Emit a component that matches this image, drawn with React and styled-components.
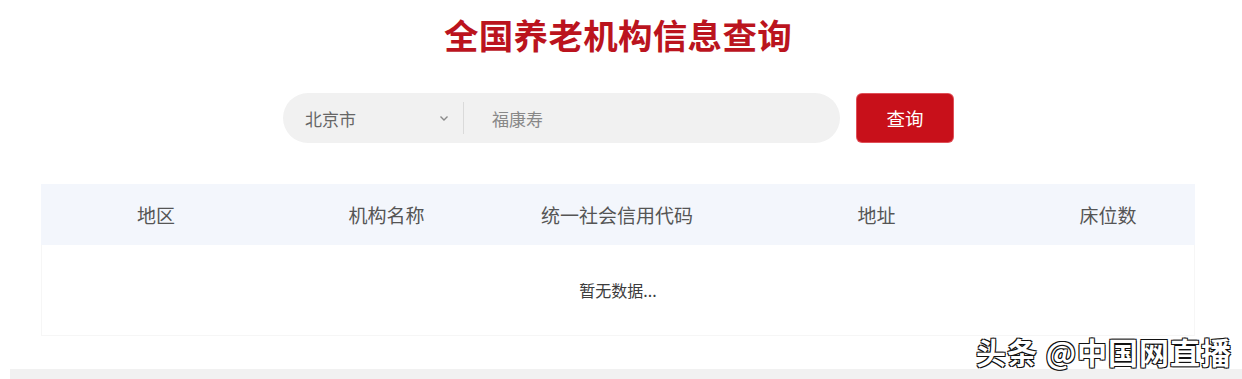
import React from 'react';
import styled, { createGlobalStyle } from 'styled-components';

const GlobalStyle = createGlobalStyle`
  body {
    margin: 0;
    background: #ffffff;
    font-family: "Noto Sans CJK SC", "Noto Sans", sans-serif;
  }
`;

const Page = styled.div`
  position: relative;
  width: 1242px;
  height: 379px;
  box-sizing: border-box;
  padding-right: 6px;
  overflow: hidden;
  display: flex;
  flex-direction: column;
  align-items: center;
`;

const Title = styled.h1`
  margin: 12px 0 0;
  height: 44px;
  line-height: 44px;
  font-size: 34.5px;
  font-weight: 700;
  color: #bb141e;
  letter-spacing: 0.3px;
`;

const SearchRow = styled.div`
  margin-top: 37px;
  display: flex;
  align-items: center;
  gap: 17px;
`;

const SearchPill = styled.div`
  width: 557px;
  height: 50px;
  border-radius: 25px;
  background: #f1f1f1;
  display: flex;
  align-items: center;
`;

const Select = styled.div`
  width: 180px;
  box-sizing: border-box;
  padding: 0 14px 0 22px;
  display: flex;
  align-items: center;
  justify-content: space-between;
  font-size: 17px;
  color: #666666;
`;

const Divider = styled.div`
  width: 1px;
  height: 32px;
  background: #dadada;
`;

const InputText = styled.div`
  padding-left: 28px;
  font-size: 17px;
  color: #888888;
`;

const Button = styled.button`
  width: 96px;
  height: 48px;
  border: none;
  border-radius: 5px;
  background: #c8101a;
  color: #ffffff;
  font-family: inherit;
  font-size: 18.5px;
  box-shadow: 0 0 0 1px #e05058;
`;

const Table = styled.div`
  margin-top: 41px;
  width: 1154px;
`;

const HeaderRow = styled.div`
  display: grid;
  grid-template-columns: 230px 231px 230px 289px 174px;
  height: 61px;
  align-items: center;
  background: #f3f6fc;
`;

const HeaderCell = styled.div`
  text-align: center;
  font-size: 19px;
  color: #555555;
`;

const Empty = styled.div`
  height: 90px;
  display: flex;
  align-items: center;
  justify-content: center;
  font-size: 16px;
  color: #3c3c3c;
  border: 1px solid #f6f6f6;
  border-top: none;
`;

const BottomStrip = styled.div`
  position: absolute;
  left: 10px;
  right: 0;
  bottom: 0;
  height: 10px;
  background: #f1f1f1;
`;

const Watermark = styled.div`
  position: absolute;
  right: 10px;
  top: 329px;
  font-size: 30px;
  font-weight: 700;
  color: #ffffff;
  letter-spacing: 1px;
  text-shadow: 1px 1px 0 #111, -1px -1px 0 #111, 1px -1px 0 #111, -1px 1px 0 #111;
`;

const Chevron = () => (
  <svg width="10" height="7" viewBox="0 0 10 7">
    <path d="M1.5 1.5 L5 5 L8.5 1.5" fill="none" stroke="#8a8a8a" strokeWidth="1.4" />
  </svg>
);

const columns = ['地区', '机构名称', '统一社会信用代码', '地址', '床位数'];

export default function App() {
  return (
    <Page>
      <GlobalStyle />
      <Title>全国养老机构信息查询</Title>
      <SearchRow>
        <SearchPill>
          <Select>
            <span>北京市</span>
            <Chevron />
          </Select>
          <Divider />
          <InputText>福康寿</InputText>
        </SearchPill>
        <Button>查询</Button>
      </SearchRow>
      <Table>
        <HeaderRow>
          {columns.map((c) => (
            <HeaderCell key={c}>{c}</HeaderCell>
          ))}
        </HeaderRow>
        <Empty>暂无数据...</Empty>
      </Table>
      <BottomStrip />
      <Watermark>头条 @中国网直播</Watermark>
    </Page>
  );
}
